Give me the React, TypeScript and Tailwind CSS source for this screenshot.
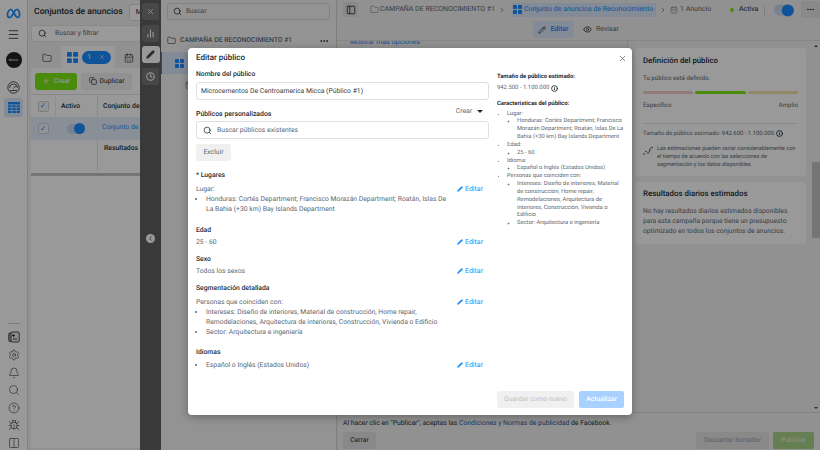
import { FC, ReactNode } from "react";
import {
    Search, X, BarChart2, Pencil, Clock, Menu, Folder, Plus, Copy, ChevronRight,
    Settings, Bell, HelpCircle, Bug, Columns2, ChevronLeft, Eye, PanelLeft, MoreHorizontal, Info, CalendarDays,
} from "lucide-react";

const Grid4: FC<{ size: number; className?: string }> = ({ size, className }) => (
    <svg width={size} height={size} viewBox="0 0 12 12" className={className} fill="currentColor">
        <rect x="0" y="0" width="5.3" height="5.3" rx="1" />
        <rect x="6.7" y="0" width="5.3" height="5.3" rx="1" />
        <rect x="0" y="6.7" width="5.3" height="5.3" rx="1" />
        <rect x="6.7" y="6.7" width="5.3" height="5.3" rx="1" />
    </svg>
)

const MetaLogo = () => (
    <svg width="15" height="11" viewBox="0 0 30 20" fill="none" stroke="#1a8cff" strokeWidth="3.4" strokeLinecap="round">
        <path d="M3 13c0-6 3-11 6.500-11 5 0 9 16 14 16 6 0 4-16-2-16-5 0-9 16-14 16-3 0-4.500-2-4.500-5z" />
    </svg>
)

const GaugeIcon = () => (
    <svg width="13" height="13" viewBox="0 0 13 13" fill="none" stroke="currentColor" strokeWidth="0.800" className="mt-[13px]">
        <circle cx="6.500" cy="6.500" r="5.700" />
        <path d="M2.500 7a4 4 0 0 1 8 0M6.500 7.500l2.500-3M3 9.500h7" />
    </svg>
)

const TableIcon = () => (
    <svg width="12" height="11" viewBox="0 0 12 11" fill="currentColor">
        <rect x="0" y="0" width="12" height="2.500" rx="0.500" />
        <rect x="0" y="3.300" width="3.500" height="2.100" />
        <rect x="4.200" y="3.300" width="3.600" height="2.100" />
        <rect x="8.500" y="3.300" width="3.500" height="2.100" />
        <rect x="0" y="6.100" width="3.500" height="2.100" />
        <rect x="4.200" y="6.100" width="3.600" height="2.100" />
        <rect x="8.500" y="6.100" width="3.500" height="2.100" />
        <rect x="0" y="8.900" width="3.500" height="2.100" />
        <rect x="4.200" y="8.900" width="3.600" height="2.100" />
        <rect x="8.500" y="8.900" width="3.500" height="2.100" />
    </svg>
)

const AddDocIcon = () => (
    <svg width="12" height="12" viewBox="0 0 12 12" fill="none" stroke="currentColor" strokeWidth="0.800">
        <rect x="0.800" y="2" width="7" height="8.500" rx="1" fill="#b8b8b8" />
        <rect x="3" y="1" width="8.200" height="10" rx="1" fill="#e8e8e8" />
        <path d="M5.500 3v3M4 4.500h3M5 8h4" />
    </svg>
)

const TrendIcon = () => (
    <svg width="10" height="10" viewBox="0 0 10 10" fill="currentColor" className="shrink-0 mt-[1px]">
        <circle cx="1" cy="8" r="0.700" />
        <circle cx="3" cy="5.500" r="0.700" />
        <circle cx="5" cy="7" r="0.700" />
        <path d="M6 6.500L7.500 2" stroke="currentColor" strokeWidth="0.800" />
        <circle cx="9" cy="1.500" r="0.700" />
    </svg>
)

const Toggle = () => (
    <div className="w-[18px] h-[10px] rounded-full bg-[#c9d8ef] relative">
        <div className="absolute right-0 top-[-0.5px] w-[11px] h-[11px] rounded-full bg-[#1a8cff]" />
    </div>
)

const EditLink = () => (
    <span className="flex items-center self-start h-[10px] gap-[2px] text-[#1a8cff] shrink-0 w-[28px] mr-[3px]">
        <Pencil size={6} fill="#1a8cff" strokeWidth={1.500} />
        <span className="text-[7px]">Editar</span>
    </span>
)

const Section: FC<{ title: string; children: ReactNode; className?: string }> = ({ title, children, className }) => (
    <div className={className}>
        <p className="text-[6.800px] leading-[10px] font-medium text-[#1c2b33]">{title}</p>
        {children}
    </div>
)

const SideRail = () => (
    <div className="w-[28px] shrink-0 bg-white border-r border-[#d9d9d9] flex flex-col items-center text-[#1c2b33]">
        <div className="h-[26px] flex items-center"><MetaLogo /></div>
        <Menu size={13} strokeWidth={1.500} className="mt-[2px]" />
        <div className="mt-[11px] w-4 h-4 rounded-full bg-[#222] flex items-center justify-center text-[3px] text-white">MICCA</div>
        <GaugeIcon />
        <div className="mt-[4px] w-[19px] h-[19px] rounded-[3px] bg-[#d9e8fb] flex items-center justify-center text-[#1a8cff]">
            <TableIcon />
        </div>
        <div className="mt-auto w-[12px] border-t border-[#d0d0d0] mb-[7px]" />
        <div className="flex flex-col items-center gap-[5.600px] pb-[1px]">
            <AddDocIcon />
            <Settings size={12} strokeWidth={1.100} />
            <Bell size={12} strokeWidth={1.100} />
            <Search size={12} strokeWidth={1.100} />
            <HelpCircle size={12} strokeWidth={1.100} />
            <Bug size={12} strokeWidth={1.100} />
            <Columns2 size={12} strokeWidth={1.100} />
        </div>
    </div>
)

const Check = () => (
    <div className="w-[11px] h-[11px] rounded-[2px] bg-[#f2f6fc] border border-[#d0d0d0] flex items-center justify-center text-[#1a8cff] text-[8px] leading-none">✓</div>
)

const CampaignPanel = () => (
    <div className="w-[112px] shrink-0 bg-[#f2f2f2] pl-[3px] flex flex-col overflow-hidden">
        <div className="h-[25px] flex items-center whitespace-nowrap pl-[3px] shrink-0">
            <span className="text-[8.700px] font-medium text-[#1c2b33]">Conjuntos de anuncios</span>
            <span className="ml-[6px] h-[17px] px-[6px] rounded-[3px] border border-[#ddd] bg-white text-[7px] flex items-center">M</span>
        </div>
        <div className="w-[130px] h-[17px] shrink-0 bg-white rounded-[3px] flex items-center pl-[6px] gap-[8px] text-[#606770] border border-[#e4e4e4]">
            <Search size={9} className="text-[#1c2b33]" />
            <span className="text-[6.800px]">Buscar y filtrar</span>
        </div>
        <div className="flex h-[22px] shrink-0 mt-[4px] items-end pl-[5px] gap-[3px]">
            <div className="h-[20px] w-[22px] flex items-center justify-center"><Folder size={10} strokeWidth={1.500} /></div>
            <div className="h-[22px] w-[56px] bg-white rounded-t-[3px] flex items-center pl-[6px] gap-[4px]">
                <Grid4 size={11} className="text-[#1a8cff]" />
                <span className="w-[29px] h-[13px] rounded-full bg-[#1a8cff] text-white text-[6.800px] flex items-center justify-around px-[2px]"><span>1</span><X size={6} /></span>
            </div>
            <div className="h-[20px] w-[22px] flex items-center justify-center"><CalendarDays size={10} strokeWidth={1.500} /></div>
        </div>
        <div className="flex-1 mb-[2px] bg-white rounded-[3px] w-[130px] flex flex-col">
            <div className="h-[26px] flex items-center pl-[4px] gap-[4px]">
                <div className="w-[42px] h-[17px] rounded-[3px] bg-[#7ee815] text-white text-[6.800px] flex items-center justify-center gap-[4px]"><Plus size={8} />Crear</div>
                <div className="w-[51px] h-[17px] rounded-[3px] bg-[#f2f2f2] text-[6.800px] flex items-center justify-center gap-[3px]"><Copy size={8} />Duplicar</div>
            </div>
            <div className="border-t border-[#e4e4e4] h-[23px] flex items-center text-[6.800px] font-medium text-[#1c2b33] whitespace-nowrap">
                <div className="w-[24px] flex justify-center"><Check /></div>
                <div className="w-[42px] pl-[5px] h-full flex items-center border-l border-[#eee]">Activo</div>
                <div className="pl-[5px] border-l border-[#e4e4e4] h-full flex items-center">Conjunto de</div>
            </div>
            <div className="h-[23px] bg-[#e4effc] flex items-center text-[6.800px] whitespace-nowrap">
                <div className="w-[24px] flex justify-center"><Check /></div>
                <div className="w-[42px] pl-[12px]"><Toggle /></div>
                <div className="pl-[5px] text-[#1a8cff] mb-[3px]">Conjunto de</div>
            </div>
            <div className="h-[36px] text-[6.800px] font-medium text-[#1c2b33] whitespace-nowrap border-b-[3px] border-[#c4c4c4]">
                <div className="ml-[66px] h-[30px] pl-[6px] pt-[3px] border-l border-[#e4e4e4]">Resultados</div>
            </div>
        </div>
    </div>
)

const ToolRail = () => (
    <div className="w-[21px] shrink-0 bg-[#606060] flex flex-col items-center pt-[3px] gap-[4px] text-white">
        <div className="w-[17px] h-[17px] rounded-[3px] bg-white/15 flex items-center justify-center"><X size={9} /></div>
        <div className="w-[17px] h-[17px] mt-[1px] rounded-[3px] bg-white/15 flex items-center justify-center"><BarChart2 size={9} strokeWidth={3} /></div>
        <div className="w-[18px] h-[17px] rounded-[3px] bg-white text-[#444] flex items-center justify-center"><Pencil size={9} fill="#444" /></div>
        <div className="w-[17px] h-[17px] mt-[1px] rounded-[3px] bg-white/15 flex items-center justify-center"><Clock size={9} strokeWidth={3} /></div>
        <div className="mt-[144.500px] w-[9px] h-[9px] rounded-full bg-white text-[#444] flex items-center justify-center"><ChevronLeft size={7} strokeWidth={3} /></div>
    </div>
)

const TreePanel = () => (
    <div className="w-[176px] shrink-0 bg-[#f5f5f5] flex flex-col border-r border-[#d0d0d0] text-[#606770] whitespace-nowrap">
        <div className="mx-[6px] mt-[3px] h-[17px] rounded-[3px] border border-[#d9d9d9] flex items-center pl-[5px] gap-[4px]">
            <Search size={9} className="text-[#1c2b33]" />
            <span className="text-[6.600px]">Buscar</span>
        </div>
        <div className="h-[23px] mt-[9px] flex items-center pl-[6px] gap-[4px] text-[6.800px]">
            <Folder size={9} strokeWidth={1.500} className="text-[#1c2b33]" />
            <span className="font-medium">CAMPAÑA DE RECONOCIMIENTO #1</span>
            <MoreHorizontal size={10} className="ml-auto mr-[7px] text-[#1c2b33]" />
        </div>
        <div className="h-[22px] bg-[#d9e8fb] border-l border-[#1a8cff] pl-[13px] flex items-center text-[#1a8cff]"><Grid4 size={9} /></div>
        <div className="h-[22px] pl-[24px] flex items-center"><CalendarDays size={8} strokeWidth={1.500} /></div>
    </div>
)

const Card: FC<{ children: ReactNode; className?: string }> = ({ children, className }) => (
    <div className={`bg-white rounded-[4px] px-[8px] ${className ?? ""}`}>{children}</div>
)

const MainPanel = () => (
    <div className="flex-1 min-w-0 bg-[#f2f2f2] flex flex-col relative text-[#1c2b33]">
        <div className="h-[19px] shrink-0 flex items-center pl-[6px] text-[7px] whitespace-nowrap text-[#606770]">
            <div className="w-[15px] h-[15px] rounded-[2px] bg-[#e4e4e4] flex items-center justify-center"><PanelLeft size={10} className="text-[#1c2b33]" /></div>
            <Folder size={9} strokeWidth={1.300} className="ml-[12px] mr-[1px]" />
            <span className="w-[112px]">CAMPAÑA DE RECONOCIMIENTO #1</span>
            <ChevronRight size={8} className="mx-[6px]" />
            <div className="h-[14px] bg-[#d9e8fb] text-[#1a8cff] flex items-center gap-[2px] w-[144px] overflow-hidden">
                <Grid4 size={9} className="shrink-0 ml-[1px]" />
                <span>Conjunto de anuncios de Reconocimiento #</span>
            </div>
            <ChevronRight size={8} className="mx-[3px]" />
            <CalendarDays size={8} strokeWidth={1.300} className="mr-[2px]" />
            <span className="w-[31px]">1 Anuncio</span>
            <span className="ml-[19px] w-[4px] h-[4px] rounded-full bg-[#7ee815]" />
            <span className="ml-[5px] text-[#1c2b33] w-[20px]">Activa</span>
            <span className="mx-[5px] h-[10px] border-l border-[#d0d0d0]" />
            <div className="scale-[1.100] ml-[5px]"><Toggle /></div>
            <div className="ml-[8px] w-[19px] h-[17px] rounded-[2px] bg-[#e4e4e4] flex items-center justify-center text-[#1c2b33]"><MoreHorizontal size={9} /></div>
        </div>
        <div className="h-[21px] shrink-0 flex items-center pl-[196px] text-[7px] gap-[9px] whitespace-nowrap">
            <div className="w-[41px] h-[17px] rounded-[2px] bg-[#d9e8fb] flex items-center justify-center gap-[4px] text-[#1a8cff] font-medium"><Pencil size={8} className="text-[#1c2b33]" />Editar</div>
            <div className="flex items-center gap-[4px] text-[#606770]"><Eye size={9} className="text-[#1c2b33]" />Revisar</div>
        </div>
        <div className="flex-1 flex min-h-0 border-t border-[#e0e0e0]">
            <div className="w-[291px] shrink-0 border-r border-[#d9d9d9] overflow-hidden">
                <p className="text-[7px] leading-[8px] -mt-[3px] pl-[13px] text-[#1a8cff]">Mostrar más opciones</p>
            </div>
            <div className="flex-1 min-w-0 pl-[7px] flex flex-col gap-[6px]">
                <Card className="w-[171px] h-[128px] mt-[7px]">
                    <p className="text-[7.800px] leading-[10px] font-medium pt-[7.700px] box-content">Definición del público</p>
                    <p className="text-[6.200px] leading-[8px] text-[#606770] mt-[8px]">Tu público está definido.</p>
                    <div className="flex gap-[2px] mt-[9.500px]">
                        <div className="h-[3px] w-[49.500px] rounded-full bg-[#f5cccc]" />
                        <div className="h-[3px] w-[51px] rounded-full bg-[#7ee815]" />
                        <div className="h-[3px] w-[50px] rounded-full bg-[#f2e0aa]" />
                    </div>
                    <div className="flex justify-between text-[6.200px] leading-[8px] text-[#606770] mt-[6.500px] pb-[14px] border-b border-[#e4e4e4]">
                        <span>Específico</span><span>Amplio</span>
                    </div>
                    <p className="text-[5.900px] leading-[8px] text-[#606770] mt-[6px] flex items-center gap-[2px]">Tamaño de público estimado: 942.600 - 1.100.000 <Info size={7} strokeWidth={3} className="text-[#1c2b33]" /></p>
                    <div className="flex mt-[7.500px] gap-[4px] text-[#1c2b33]">
                        <TrendIcon />
                        <p className="text-[5.600px] leading-[8px] text-[#606770]">Las estimaciones pueden variar considerablemente con el tiempo de acuerdo con las selecciones de segmentación y los datos disponibles.</p>
                    </div>
                </Card>
                <Card className="w-[171px] h-[62px]">
                    <p className="text-[7.900px] leading-[10px] font-medium pt-[7px] box-content">Resultados diarios estimados</p>
                    <p className="text-[6.700px] leading-[10.200px] text-[#606770] mt-[7px]">No hay resultados diarios estimados disponibles para esta campaña porque tiene un presupuesto optimizado en todos los conjuntos de anuncios.</p>
                </Card>
            </div>
            <div className="w-[8px] shrink-0 bg-[#f2f2f2] relative">
                <div className="absolute left-0 right-0 top-[121px] h-[76px] bg-[#c4c4c4]" />
                <div className="absolute left-[1.500px] top-[4px] border-x-[2px] border-x-transparent border-b-[2px] border-b-[#444]" />
                <div className="absolute left-[1.500px] bottom-[3px] border-x-[2px] border-x-transparent border-t-[2px] border-t-[#444]" />
            </div>
        </div>
        <div className="h-[38px] shrink-0 border-t border-[#d9d9d9] pl-[6px] pr-[6px] text-[6.800px] text-[#1c2b33] whitespace-nowrap">
            <p className="mt-[5px] leading-[10px]">Al hacer clic en "Publicar", aceptas las <span className="text-[#1b5a9e]">Condiciones y Normas de publicidad</span> de Facebook.</p>
            <div className="flex mt-[4px] items-center">
                <div className="w-[33px] h-[17px] rounded-[2px] bg-[#e4e4e4] flex items-center justify-center">Cerrar</div>
                <div className="ml-auto w-[73px] h-[17px] rounded-[2px] bg-[#e4e4e4] flex items-center justify-center text-[#a0a0a0]">Descartar borrador</div>
                <div className="ml-[4px] w-[41px] h-[17px] rounded-[2px] bg-[#a9d48a] flex items-center justify-center text-[#e0e8d8] font-medium">Publicar</div>
            </div>
        </div>
    </div>
)

const EditAudienceModal = () => (
    <div className="absolute left-[188px] top-[48px] w-[444px] h-[367px] bg-white rounded-[4px] shadow-[0_2px_8px_rgba(0,0,0,0.3)] flex text-[#606770] whitespace-normal">
        <div className="w-[300px] shrink-0 pl-[8px] flex flex-col">
            <p className="text-[8px] leading-[12px] font-medium text-[#1c2b33] mt-[4px]">Editar público</p>
            <p className="text-[6.800px] leading-[10px] font-medium text-[#1c2b33] mt-[5px]">Nombre del público</p>
            <div className="w-[293px] h-[18px] rounded-[3px] border border-[#dddfe2] mt-[3px] flex items-center pl-[4px] text-[6.800px] text-[#3a3f45]">Microcementos De Centroamerica Micca (Público #1)</div>
            <div className="w-[287px] flex items-start mt-[6px] h-[15px]">
                <p className="text-[6.900px] leading-[10px] font-medium text-[#1c2b33] mt-[3px]">Públicos personalizados</p>
                <span className="ml-auto text-[6.800px] leading-[10px] flex items-center">Crear<span className="ml-[5px] border-x-[3px] border-x-transparent border-t-[3px] border-t-[#1c2b33]" /></span>
            </div>
            <div className="w-[293px] h-[18px] rounded-[3px] border border-[#dddfe2] flex items-center pl-[6px] gap-[5px] text-[6.800px]">
                <Search size={9} className="text-[#1c2b33]" /> Buscar públicos existentes
            </div>
            <div className="w-[35px] h-[17px] rounded-[3px] bg-[#f0f0f0] mt-[5px] flex items-center justify-center text-[6.800px]">Excluir</div>
            <Section title="* Lugares" className="mt-[9px]">
                <div className="flex justify-between mt-[4px] w-[292px]">
                    <div className="text-[6.800px] leading-[10px] w-[255px]">
                        <p>Lugar:</p>
                        <ul className="list-disc pl-[10px]">
                            <li>Honduras: Cortés Department; Francisco Morazán Department; Roatán, Islas De La Bahia (+30 km) Bay Islands Department</li>
                        </ul>
                    </div>
                    <EditLink />
                </div>
            </Section>
            <Section title="Edad" className="mt-[10.500px]">
                <div className="flex justify-between mt-[2px] w-[292px] text-[6.800px] leading-[10px]"><span>25 - 60</span><EditLink /></div>
            </Section>
            <Section title="Sexo" className="mt-[7.500px]">
                <div className="flex justify-between mt-[2px] w-[292px] text-[6.800px] leading-[10px]"><span>Todos los sexos</span><EditLink /></div>
            </Section>
            <Section title="Segmentación detallada" className="mt-[7px]">
                <div className="flex justify-between mt-[4px] w-[292px]">
                    <div className="text-[6.800px] leading-[10px] w-[255px]">
                        <p>Personas que coinciden con:</p>
                        <ul className="list-disc pl-[10px]">
                            <li>Intereses: Diseño de interiores, Material de construcción, Home repair, Remodelaciones, Arquitectura de interiores, Construcción, Vivienda o Edificio</li>
                            <li>Sector: Arquitectura e ingeniería</li>
                        </ul>
                    </div>
                    <EditLink />
                </div>
            </Section>
            <Section title="Idiomas" className="mt-[10px]">
                <div className="flex justify-between mt-[3px] w-[292px] text-[6.800px] leading-[10px]">
                    <ul className="list-disc pl-[10px]"><li>Español o Inglés (Estados Unidos)</li></ul>
                    <EditLink />
                </div>
            </Section>
        </div>
        <div className="flex-1 min-w-0 pl-[9px] pr-[8px] flex flex-col relative">
            <div className="flex justify-end pt-[5.500px] h-[23px] -mr-[3px]"><X size={9} className="text-[#606770]" /></div>
            <p className="text-[5.900px] leading-[8px] font-bold text-[#1c2b33] mt-[1.500px]">Tamaño de público estimado:</p>
            <p className="text-[5.900px] leading-[8px] mt-[3.500px] flex items-center gap-[2px]">942.500 - 1.100.000 <Info size={7} strokeWidth={3} className="text-[#1c2b33]" /></p>
            <p className="text-[5.900px] leading-[8px] font-bold text-[#1c2b33] mt-[8px]">Características del público:</p>
            <ul className="list-disc pl-[10px] text-[5.800px] leading-[7.850px] mt-[2.500px] w-[129px]">
                <li>Lugar:
                    <ul className="list-[circle] pl-[10px]"><li>Honduras: Cortés Department; Francisco Morazán Department; Roatán, Islas De La Bahia (+30 km) Bay Islands Department</li></ul>
                </li>
                <li>Edad:
                    <ul className="list-[circle] pl-[10px]"><li>25 - 60</li></ul>
                </li>
                <li>Idioma:
                    <ul className="list-[circle] pl-[10px]"><li>Español o Inglés (Estados Unidos)</li></ul>
                </li>
                <li>Personas que coinciden con:
                    <ul className="list-[circle] pl-[10px]">
                        <li>Intereses: Diseño de interiores, Material de construcción, Home repair, Remodelaciones, Arquitectura de interiores, Construcción, Vivienda o Edificio</li>
                        <li>Sector: Arquitectura e ingeniería</li>
                    </ul>
                </li>
            </ul>
            <div className="mt-auto mb-[7px] flex justify-end gap-[5px] text-[6.800px]">
                <div className="w-[79px] h-[17px] rounded-[2px] bg-[#f0f0f0] text-[#bcc0c4] flex items-center justify-center">Guardar como nuevo</div>
                <div className="w-[46px] h-[17px] rounded-[2px] bg-[#a8d1ff] text-white font-medium flex items-center justify-center">Actualizar</div>
            </div>
        </div>
    </div>
)

const App = () => {
    return (
        <div className="relative w-[820px] h-[450px] overflow-hidden flex font-['Roboto',sans-serif] [text-rendering:geometricPrecision] text-[#1c2b33]">
            <SideRail />
            <CampaignPanel />
            <ToolRail />
            <TreePanel />
            <MainPanel />
            <div className="absolute inset-0 bg-black/40" />
            <EditAudienceModal />
        </div>
    )
}

export default App;
